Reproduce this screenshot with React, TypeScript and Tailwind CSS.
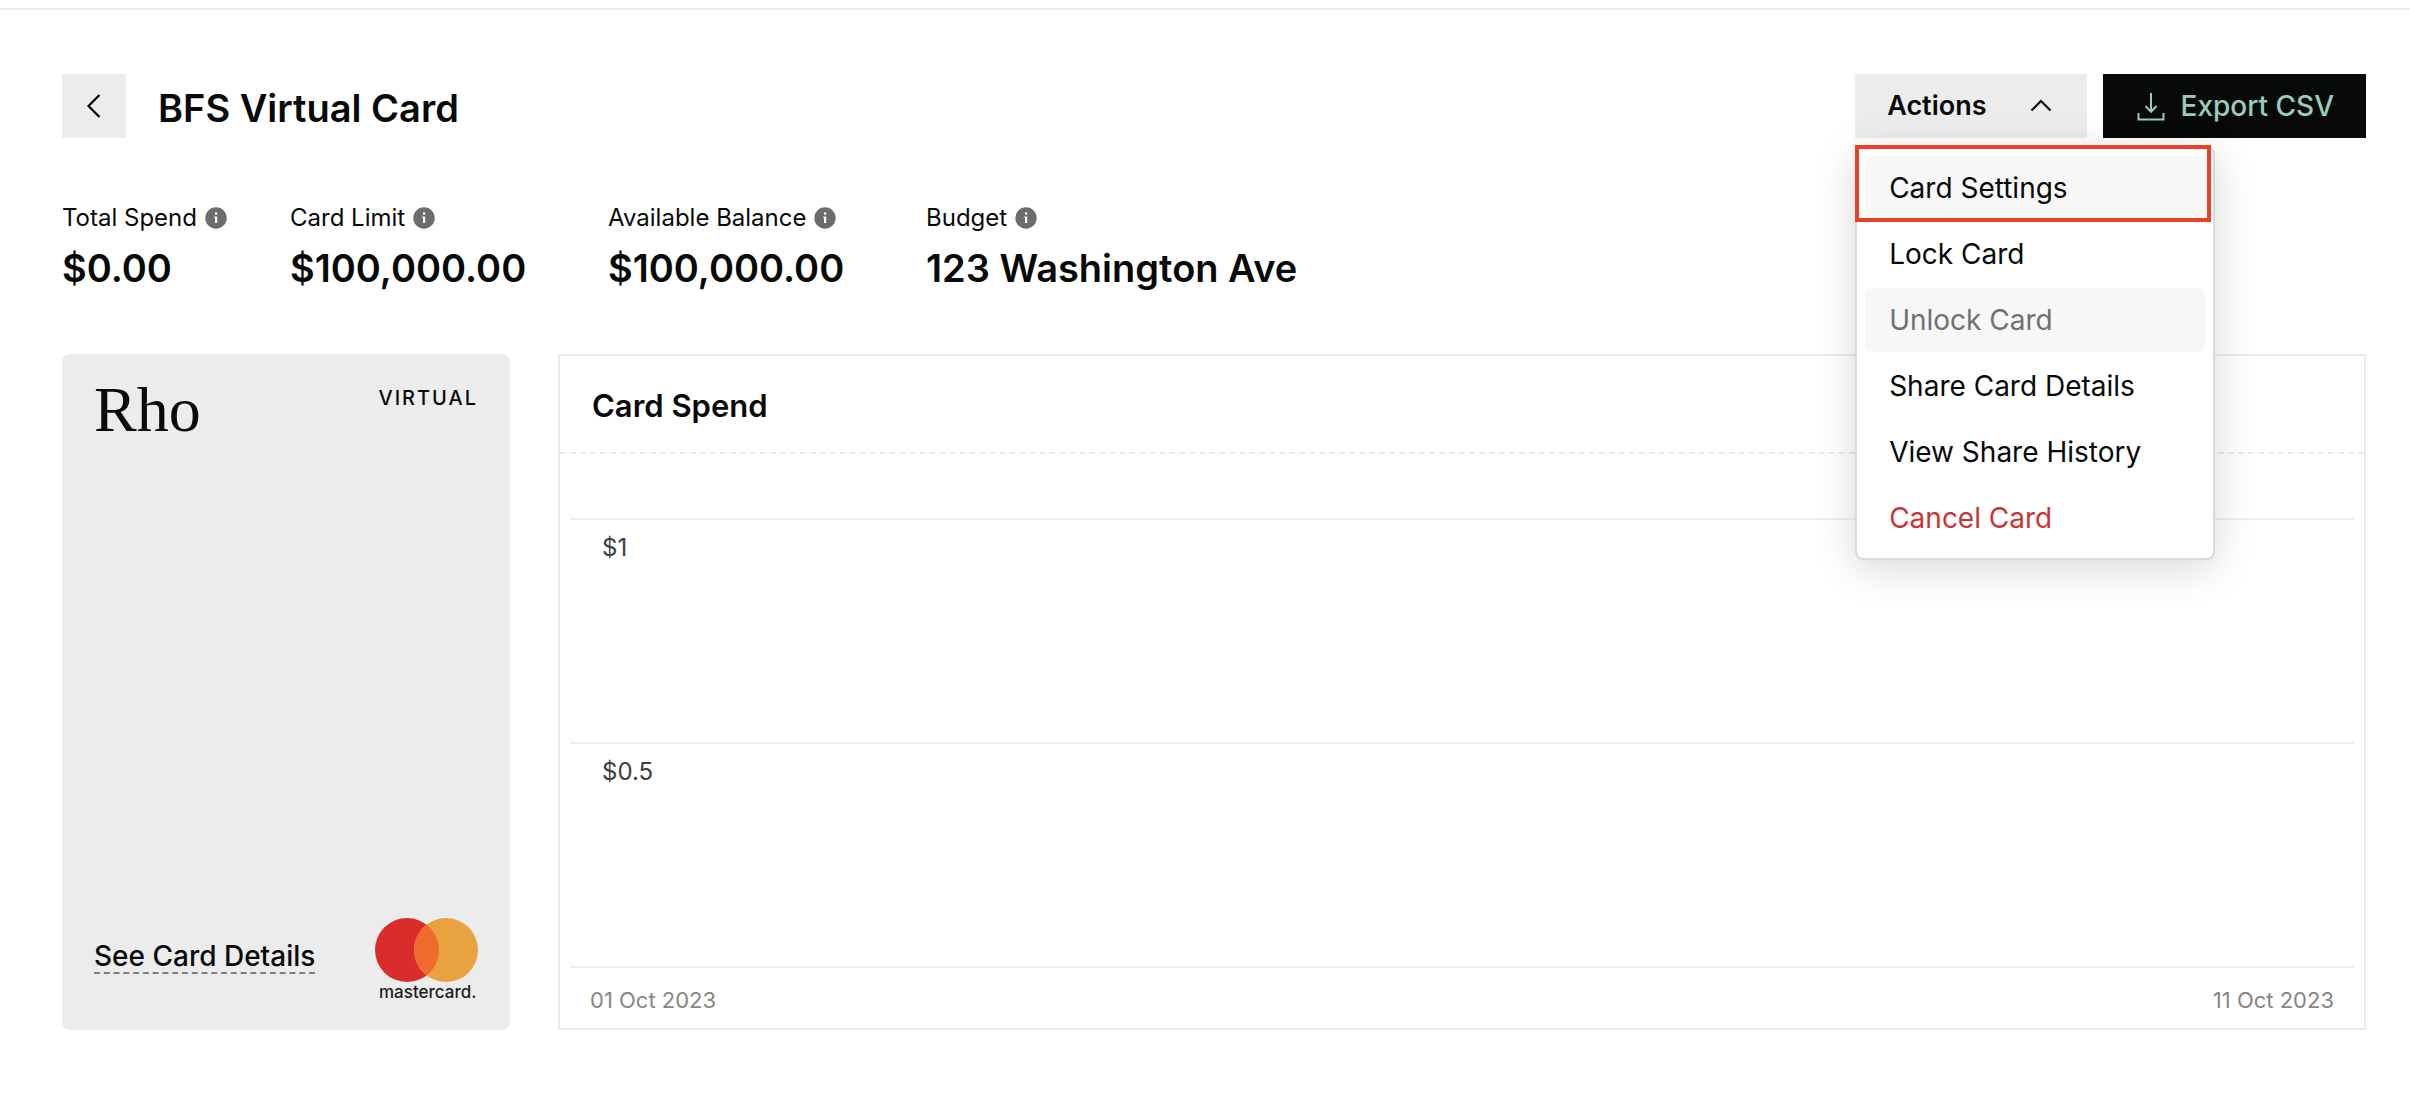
import { useState } from 'react'
import clsx from 'clsx'

const stats = [
  { label: 'Total Spend', value: '$0.00' },
  { label: 'Card Limit', value: '$100,000.00' },
  { label: 'Available Balance', value: '$100,000.00' },
  { label: 'Budget', value: '123 Washington Ave' },
]

const actions = [
  { label: 'Card Settings', active: true },
  { label: 'Lock Card' },
  { label: 'Unlock Card', disabled: true },
  { label: 'Share Card Details' },
  { label: 'View Share History' },
  { label: 'Cancel Card', danger: true },
]

const ticks = ['$1', '$0.5']

function InfoIcon() {
  return (
    <svg viewBox="0 0 22 22" className="size-[22px]" aria-hidden="true">
      <circle cx="11" cy="11" r="10.7" fill="#6b6c6b" />
      <rect x="10" y="5.4" width="2.2" height="2.2" fill="#fff" />
      <path d="M9.4 9.6h2.8v6.4H10v-5h-.6z" fill="#fff" />
    </svg>
  )
}

function DownloadIcon() {
  return (
    <svg viewBox="0 0 32 32" className="size-8" fill="none" stroke="currentColor" strokeWidth="2" aria-hidden="true">
      <path d="M16 3v18.5M10.5 16l5.5 5.8 5.5-5.8" />
      <path d="M3.5 23v6.5h25V23" />
    </svg>
  )
}

function Mastercard() {
  return (
    <svg viewBox="0 0 104 84" className="h-[84px] w-[104px]" role="img" aria-label="mastercard">
      <circle cx="33" cy="32" r="32" fill="#d92d2b" />
      <circle cx="72" cy="32" r="32" fill="#e9a240" />
      <path d="M52.5 6.6a32 32 0 0 1 0 50.8a32 32 0 0 1 0-50.8z" fill="#ee6b2d" />
      <text x="5" y="80" fontSize="17" fontWeight="500" fontFamily="Inter, sans-serif" fill="#1c1c1c">
        mastercard.
      </text>
    </svg>
  )
}

function ActionsMenu() {
  const [open, setOpen] = useState(true)

  return (
    <div className="relative">
      <button
        type="button"
        aria-haspopup="menu"
        aria-expanded={open}
        onClick={() => setOpen(!open)}
        className="flex h-16 items-center gap-10 bg-[#ececec] px-8 text-[27px] font-semibold"
      >
        Actions
        <svg viewBox="0 0 28 28" className="size-7" fill="none" stroke="currentColor" strokeWidth="2.2" aria-hidden="true">
          <path d="M4.5 18.5L14 9l9.5 9.5" />
        </svg>
      </button>

      {open && (
        <div
          role="menu"
          className="absolute top-[72px] left-0 z-10 flex w-[360px] flex-col gap-0.5 rounded-lg border-2 border-[#d9d9d9] bg-white p-2 shadow-[0_8px_40px_rgba(0,0,0,0.16)]"
        >
          {actions.map(a => (
            <button
              key={a.label}
              type="button"
              role="menuitem"
              disabled={a.disabled}
              className={clsx(
                'h-16 rounded-lg px-6 text-left text-[28px]',
                (a.active || a.disabled) && 'bg-[#f7f7f7]',
                a.disabled && 'text-[#707170]',
                a.danger && 'text-[#c93436]',
              )}
            >
              {a.label}
            </button>
          ))}
          <span className="pointer-events-none absolute -top-[3px] -left-0.5 h-[77px] w-[356px] border-4 border-[#ea4027]" />
        </div>
      )}
    </div>
  )
}

export default function App() {
  return (
    <div className="min-h-screen bg-white font-[Inter,sans-serif] text-[#080a09]">
      <div className="h-2.5 border-b-2 border-[#ebebeb]" />

      <main className="pt-16 pr-11 pb-20 pl-[62px]">
        <header className="flex items-center justify-between">
          <div className="flex items-center gap-8">
            <button type="button" aria-label="Back" className="flex size-16 items-center justify-center bg-[#ececec]">
              <svg viewBox="0 0 32 32" className="size-8" fill="none" stroke="currentColor" strokeWidth="2.2">
                <path d="M21.5 5L10.5 16l11 11" />
              </svg>
            </button>
            <h1 className="pt-1 text-[38px] leading-12 font-semibold">BFS Virtual Card</h1>
          </div>

          <div className="flex items-center gap-4">
            <ActionsMenu />
            <button
              type="button"
              className="flex h-16 items-center gap-3.5 bg-[#080a09] px-8 text-[28px] font-medium text-[#9accbd]"
            >
              <DownloadIcon />
              Export CSV
            </button>
          </div>
        </header>

        <dl className="mt-16 grid grid-cols-[228px_318px_318px_auto]">
          {stats.map(s => (
            <div key={s.label}>
              <dt className="flex items-center gap-2 text-2xl whitespace-nowrap">
                {s.label}
                <InfoIcon />
              </dt>
              <dd className="mt-2.5 text-[38px] leading-12 font-semibold whitespace-nowrap">{s.value}</dd>
            </div>
          ))}
        </dl>

        <div className="mt-[62px] flex gap-12">
          <section className="flex w-[448px] shrink-0 flex-col justify-between rounded-lg bg-[#ececec] px-8 pt-6 pb-7">
            <div className="flex items-start justify-between">
              <span className="font-['Liberation_Serif',serif] text-[64px] leading-16">Rho</span>
              <span className="mt-1 text-xl leading-8 font-medium tracking-widest">VIRTUAL</span>
            </div>
            <div className="flex items-end justify-between">
              <a href="#details" className="mb-7 border-b-2 border-dashed border-[#7d7e7d] text-[28px] leading-8 font-medium">
                See Card Details
              </a>
              <Mastercard />
            </div>
          </section>

          <section className="flex-1 border-2 border-[#ebebeb]">
            <div className="flex h-[98px] items-center border-b-2 border-dashed border-[#ebebeb] px-8">
              <h2 className="pt-1 text-[31px] leading-10 font-semibold">Card Spend</h2>
            </div>
            <div className="mx-2.5 pt-16">
              {ticks.map(t => (
                <div key={t} className="h-56 border-t-2 border-[#ebf0f4] pt-3 pl-8 text-2xl text-[#3c3d3c]">
                  {t}
                </div>
              ))}
              <div className="flex justify-between border-t-2 border-[#ebf0f4] px-5 pt-4 pb-3 text-[22px] leading-8 text-[#858685]">
                <span>01 Oct 2023</span>
                <span>11 Oct 2023</span>
              </div>
            </div>
          </section>
        </div>
      </main>
    </div>
  )
}
